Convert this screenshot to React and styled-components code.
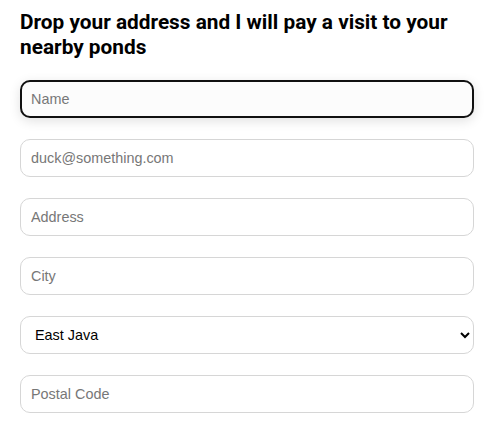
import React from "react";
import styled, { createGlobalStyle, css } from "styled-components";

const Global = createGlobalStyle`
  html, body { margin: 0; padding: 0; background: #fff; }
  body { font-family: "Liberation Sans", Arial, sans-serif; }
`;

const Page = styled.div`
  padding: 10px 28px 0 20px;
`;

const Title = styled.h2`
  margin: 0 0 20px;
  font-family: Roboto, sans-serif;
  font-weight: 700;
  font-size: 20.8px;
  line-height: 25px;
  color: #000;
`;

const Form = styled.form`
  display: flex;
  flex-direction: column;
  gap: 21px;
`;

const fieldBase = css`
  box-sizing: border-box;
  width: 100%;
  height: 38px;
  border: 1px solid #d6d6d6;
  border-radius: 10px;
  font-family: "Liberation Sans", Arial, sans-serif;
  font-size: 14.4px;
  color: #000;
  background: #fff;
  outline: none;
  margin: 0;
`;

const Input = styled.input`
  ${fieldBase}
  padding: 0 10px;
  &::placeholder { color: #777; }
  ${(p) =>
    p.$active &&
    css`
      border: 2px solid #111;
      padding: 0 9px;
      background: #fcfcfc;
      box-shadow: 0 3px 12px rgba(0, 0, 0, 0.12);
    `}
`;

const Select = styled.select`
  ${fieldBase}
  padding: 0 6px 0 10px;
`;

export default function App() {
  return (
    <>
      <Global />
      <Page>
        <Title>Drop your address and I will pay a visit to your nearby ponds</Title>
        <Form onSubmit={(e) => e.preventDefault()}>
          <Input $active autoFocus placeholder="Name" />
          <Input type="email" placeholder="duck@something.com" />
          <Input placeholder="Address" />
          <Input placeholder="City" />
          <Select defaultValue="East Java">
            <option>East Java</option>
            <option>West Java</option>
            <option>Central Java</option>
          </Select>
          <Input placeholder="Postal Code" />
        </Form>
      </Page>
    </>
  );
}
